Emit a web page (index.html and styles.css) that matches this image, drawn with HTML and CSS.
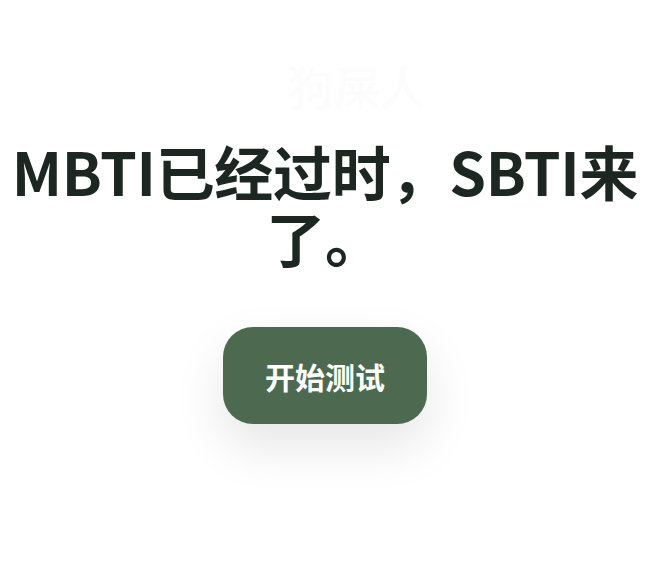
FILE: index.html
```html
<!DOCTYPE html>
<html lang="zh-CN">
<head>
    <meta charset="UTF-8">
    <meta name="viewport" content="width=device-width, initial-scale=1.0">
    <title>SBTI 测试</title>
    <link rel="stylesheet" href="styles.css">
</head>
<body>
    <main class="intro">
        <p class="kicker">狗屎人</p>
        <h1 class="headline">MBTI已经过时，SBTI来了。</h1>
        <button class="start-button" type="button">开始测试</button>
    </main>
</body>
</html>
```

FILE: styles.css
```css
:root {
    --ink: #1d2721;
    --moss: #4d6a50;
    --ghost: #fcfcfc;
}

body {
    margin: 0;
    min-height: 100vh;
    background: #fff;
    font-family: "Noto Sans CJK SC", "Noto Sans", sans-serif;
    color: var(--ink);
}

.intro {
    display: flex;
    flex-direction: column;
    align-items: center;
    padding: 58px 10px 0;
}

.kicker {
    margin: 0 0 0 64px;
    font-size: 46px;
    line-height: 54px;
    font-weight: 500;
    color: var(--ghost);
}

.headline {
    margin: 26px 0 0;
    font-size: 59px;
    line-height: 66px;
    font-weight: 700;
    text-align: center;
    letter-spacing: -0.3px;
}

.start-button {
    margin-top: 57px;
    width: 204px;
    height: 97px;
    border: none;
    border-radius: 30px;
    background: var(--moss);
    color: #fff;
    font-family: inherit;
    font-size: 30px;
    font-weight: 700;
    cursor: pointer;
    box-shadow: 0 22px 50px rgba(0, 0, 0, 0.10);
}
```
